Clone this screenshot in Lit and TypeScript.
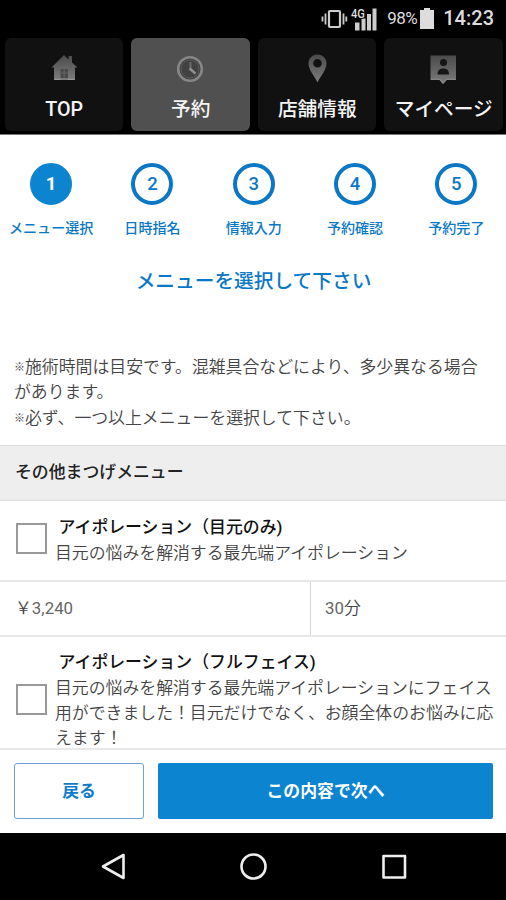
import { LitElement, html, css, svg } from "lit";
import { customElement } from "lit/decorators.js";
import { classMap } from "lit/directives/class-map.js";

const shade = svg`<defs><linearGradient id="g" x1="0" y1="0" x2="0" y2="1">
  <stop offset="0" stop-color="#4a4a4a"/><stop offset="1" stop-color="#7c7c7c"/></linearGradient></defs>`;

const tabs = [
  {
    label: "TOP",
    active: false,
    icon: svg`<path fill="url(#g)" d="M14 2L18.500 6.500V3H22V9.500L27.500 14.500H25V27H4V14.500H1.500Z"/>
      <path fill="#4a4a4a" d="M10.500 16H18V25H10.500Z"/><path stroke="#626262" d="M14.200 16V25M10.500 20H18"/>
      <path stroke="#969696" stroke-width="1.300" d="M4.500 26.300H10.500M18 26.300H24.500"/>`,
  },
  {
    label: "予約",
    active: true,
    icon: svg`<circle cx="14" cy="16" r="11.800" fill="#414141" stroke="#868686" stroke-width="2.600"/>
      <circle cx="14" cy="16" r="9" fill="none" stroke="#5b5b5b" stroke-width="1"/>
      <path d="M14.500 9V16" fill="none" stroke="#6c6c6c" stroke-width="2"/>
      <path d="M13.500 15.500L19.500 20.500" fill="none" stroke="#909090" stroke-width="2.400"/>`,
  },
  {
    label: "店舗情報",
    active: false,
    icon: svg`<path fill="url(#g)" fill-rule="evenodd" d="M14.500 1.500C20 1.500 23.500 5.500 23.500 10.500C23.500 17 17.500 23 14.500 29.500C11.500 23 5.500 17 5.500 10.500C5.500 5.500 9 1.500 14.500 1.500ZM14.500 6A4.300 4.300 0 1 0 14.500 14.600A4.300 4.300 0 1 0 14.500 6Z"/>`,
  },
  {
    label: "マイページ",
    active: false,
    icon: svg`<path fill="url(#g)" d="M1.500 2.500H27V27H17.500L14 31L10.500 27H1.500Z"/>
      <path stroke="#858585" stroke-width="1.300" d="M2 26.300H11L14 30L17.500 26.300H26.500"  fill="none"/>
      <circle cx="14.500" cy="9.500" r="3.500" fill="#161616"/>
      <path fill="#161616" d="M8.500 21.500C8.500 17.500 10.500 15.500 14.300 15.500C18 15.500 20 17.500 20 21.500Z"/>`,
  },
];

const steps = ["メニュー選択", "日時指名", "情報入力", "予約確認", "予約完了"];

@customElement("app-root")
export class AppRoot extends LitElement {
  static styles = css`
    :host {
      display: flex;
      flex-direction: column;
      width: 506px;
      height: 900px;
      overflow: hidden;
      background: #fff;
      color: #444;
      font: 350 16.87px/25.3px Roboto, "Noto Sans CJK JP", sans-serif;
    }
    * { box-sizing: border-box; }
    svg { display: block; flex: none; }
    .status {
      height: 38px;
      flex: none;
      background: #000;
      color: #ddd;
      display: flex;
      align-items: center;
      justify-content: flex-end;
      padding: 0 12px 1px 0;
      font-weight: 400;
      font-size: 17px;
    }
    .pct { margin-left: 6px; width: 33px; letter-spacing: -0.6px; white-space: nowrap; }
    .time { font-size: 20px; font-weight: 500; margin-left: 9px; }
    .tabs {
      height: 97px;
      flex: none;
      background: #000;
      display: grid;
      grid-template-columns: repeat(4, 118.5px);
      column-gap: 8px;
      padding: 0 0 3px 4.5px;
      border-bottom: 1px solid #777;
    }
    .tab {
      display: flex;
      flex-direction: column;
      align-items: center;
      background: #111;
      border-radius: 6px;
      padding: 15px 0 0 1px;
      color: #f4f4f4;
      font-size: 19.7px;
      font-weight: 500;
      white-space: nowrap;
    }
    .tab.active { background: #505050; }
    .tab span { margin-top: 11px; line-height: 28px; }
    .steps {
      display: grid;
      grid-template-columns: repeat(5, 101.3px);
      padding: 28px 0 0 0.5px;
      height: 105px;
      flex: none;
    }
    .step {
      display: flex;
      flex-direction: column;
      align-items: center;
      color: #0b78c6;
      font-size: 14.05px;
      font-weight: 500;
    }
    .dot {
      width: 42px;
      height: 42px;
      border: 4px solid #0b78c6;
      border-radius: 50%;
      font-size: 18.5px;
      line-height: 34px;
      text-align: center;
    }
    .dot.on { background: #0c84cf; border-color: #0c84cf; color: #fff; font-weight: 700; }
    .step span { margin-top: 12px; line-height: 22px; }
    .title {
      margin: 27px 0 0 1px;
      text-align: center;
      color: #0b78c6;
      font-size: 19.7px;
      font-weight: 500;
      line-height: 30px;
      flex: none;
    }
    .note { margin: 58px 0 0 14px; height: 90px; flex: none; white-space: nowrap; }
    .mark { display: inline-block; width: 11px; font-size: 11px; line-height: 1; vertical-align: 2px; font-weight: 500; }
    .group {
      height: 56px;
      flex: none;
      background: #eee;
      border: solid #dcdcdc;
      border-width: 1px 0;
      padding: 14px 15px;
      font-weight: 500;
      color: #222;
    }
    .item { display: flex; align-items: center; padding-left: 16px; flex: none; white-space: nowrap; }
    .first { height: 79px; }
    .second { height: 111px; }
    .box { width: 31px; height: 31px; border: 2px solid #999; margin-right: 8px; flex: none; }
    .first .box { margin-top: -4px; }
    .second .box { margin-top: 13px; }
    .name { font-weight: 500; color: #111; padding-left: 3.5px; }
    .second .text { padding-top: 17px; }
    .price {
      display: grid;
      grid-template-columns: 311px 1fr;
      height: 57px;
      flex: none;
      border: solid #e8e8e8;
      border-width: 2px 0;
      line-height: 53px;
    }
    .cell { padding-left: 15px; }
    .cell b { font-weight: 400; color: #666; }
    .cell + .cell { padding-left: 14px; }
    .cell:first-child { border-right: 1px solid #d6d6d6; }
    .bar {
      height: 85px;
      flex: none;
      background: #fff;
      border-top: 2px solid #e8e8e8;
      display: flex;
      gap: 14px;
      padding: 13px 13px 14px 14px;
    }
    button {
      font: 700 16.87px/1 Roboto, "Noto Sans CJK JP", sans-serif;
      padding: 0;
      border-radius: 3px;
      height: 56px;
    }
    .back { width: 130px; background: #fff; border: 1px solid #6f9fd6; color: #0c7ccb; }
    .next { flex: 1; border: 0; border-radius: 2px; background: #0c84cf; color: #fff; }
    .nav {
      height: 67px;
      flex: none;
      background: #000;
      display: flex;
      justify-content: center;
      align-items: center;
    }
  `;

  render() {
    return html`
      <div class="status">
        <svg width="60" height="26" viewBox="0 0 60 26">
          <g fill="none" stroke="#ccc">
            <rect x="8" y="5" width="11" height="16" rx="1" stroke-width="2.200"/>
            <path stroke-width="1.800" d="M4.500 7.500V18.500M22.500 7.500V18.500M1.500 10.500V15.500M25.300 10.500V15.500"/>
          </g>
          <path fill="#ccc" d="M34 16.500h4.500v8H34zM40.500 12.500h4v12h-4zM46 8h4v16.500h-4zM51.500 2.500h4v22h-4z"/>
          <text x="30" y="11.500" font-size="12" font-weight="500" fill="#ddd" stroke="#000" stroke-width="1.500" paint-order="stroke" textLength="14" lengthAdjust="spacingAndGlyphs">4G</text>
        </svg>
        <span class="pct">98%</span>
        <svg width="14" height="22" viewBox="0 0 14 22"><path fill="#ddd" d="M4 0h6v2h4v19H0V2H4z"/></svg>
        <span class="time">14:23</span>
      </div>
      <div class="tabs">
        ${tabs.map(
          (t) => html`<div class=${classMap({ tab: true, active: t.active })}>
            <svg width="29" height="32" viewBox="0 0 29 32">${shade}${t.icon}</svg><span>${t.label}</span>
          </div>`
        )}
      </div>
      <div class="steps">
        ${steps.map(
          (s, i) => html`<div class="step">
            <div class=${classMap({ dot: true, on: i === 0 })}>${i + 1}</div><span>${s}</span>
          </div>`
        )}
      </div>
      <div class="title">メニューを選択して下さい</div>
      <div class="note">
        <span class="mark">※</span>施術時間は目安です。混雑具合などにより、多少異なる場合<br />があります。<br /><span class="mark">※</span>必ず、一つ以上メニューを選択して下さい。
      </div>
      <div class="group">その他まつげメニュー</div>
      <div class="item first">
        <div class="box"></div>
        <div class="text">
          <div class="name">アイポレーション（目元のみ)</div>
          目元の悩みを解消する最先端アイポレーション
        </div>
      </div>
      <div class="price"><div class="cell">￥<b>3,240</b></div><div class="cell"><b>30</b>分</div></div>
      <div class="item second">
        <div class="box"></div>
        <div class="text">
          <div class="name">アイポレーション（フルフェイス)</div>
          目元の悩みを解消する最先端アイポレーションにフェイス<br />用ができました！目元だけでなく、お顔全体のお悩みに応<br />えます！
        </div>
      </div>
      <div class="bar">
        <button class="back">戻る</button>
        <button class="next">この内容で次へ</button>
      </div>
      <div class="nav">
        <svg width="506" height="67" viewBox="0 0 506 67" fill="none" stroke="#eee" stroke-width="2.600" stroke-linejoin="round">
          <path d="M123.500 22V45L103 33.500Z"/>
          <circle cx="253.500" cy="33.500" r="12"/>
          <rect x="383.500" y="23" width="21.500" height="21.500"/>
        </svg>
      </div>
    `;
  }
}
